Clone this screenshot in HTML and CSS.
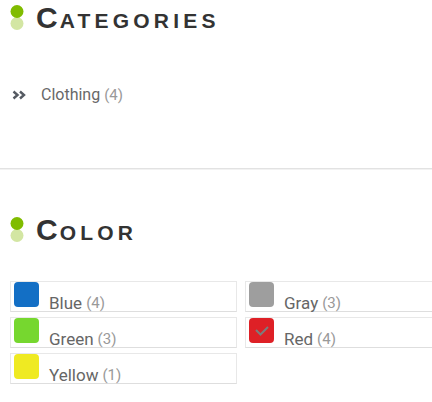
FILE: index.html
```html
<!DOCTYPE html>
<html lang="en">

<head>
    <meta charset="UTF-8">
    <meta name="viewport" content="width=device-width, initial-scale=1.0">
    <title>Shop filters</title>
    <link rel="stylesheet" href="styles.css">
</head>

<body>
    <div class="widget widget-cats">
        <h3 class="widget-title">
            <svg class="dots" width="14" height="26" viewBox="0 0 14 26">
                <circle cx="7" cy="18.5" r="6.5" fill="#d3e6a3" />
                <circle cx="7" cy="6.5" r="6.5" fill="#80bc00" />
            </svg>
            <span class="title-text">Categories</span>
        </h3>
        <ul class="cat-list">
            <li>
                <svg class="arrow" width="14" height="10" viewBox="0 0 14 10">
                    <polyline points="1.5,1.5 5.5,5 1.5,8.5" />
                    <polyline points="8,1.5 12,5 8,8.5" />
                </svg>
                <a href="#">Clothing</a> <span class="count">(4)</span>
            </li>
        </ul>
    </div>

    <div class="widget widget-color">
        <h3 class="widget-title">
            <svg class="dots" width="14" height="26" viewBox="0 0 14 26">
                <circle cx="7" cy="18.5" r="6.5" fill="#d3e6a3" />
                <circle cx="7" cy="6.5" r="6.5" fill="#80bc00" />
            </svg>
            <span class="title-text">Color</span>
        </h3>
        <ul class="color-list">
            <li><span class="swatch blue"></span><span class="name">Blue</span> <span class="count">(4)</span></li>
            <li><span class="swatch gray"></span><span class="name">Gray</span> <span class="count">(3)</span></li>
            <li><span class="swatch green"></span><span class="name">Green</span> <span class="count">(3)</span></li>
            <li>
                <span class="swatch red">
                    <svg class="check" width="25" height="25" viewBox="0 0 25 25">
                        <polyline points="7,12 11.5,16.5 19,9" />
                    </svg>
                </span><span class="name">Red</span> <span class="count">(4)</span>
            </li>
            <li><span class="swatch yellow"></span><span class="name">Yellow</span> <span class="count">(1)</span></li>
        </ul>
    </div>
</body>

</html>
```

FILE: styles.css
```css
* {
    margin: 0;
    padding: 0;
}

body {
    font-family: Roboto, "Liberation Sans", sans-serif;
    background: #fff;
    color: #666;
    overflow: hidden;
}

ul {
    list-style: none;
}

/* widget heading with the two dots */
.widget-title {
    display: flex;
    align-items: flex-start;
    height: 34px;
    padding-left: 10px;
    font-family: "Liberation Sans", Arial, sans-serif;
    font-size: 21px;
    line-height: 33px;
    font-weight: bold;
    text-transform: uppercase;
    letter-spacing: 4.2px;
    color: #333;
}

.title-text {
    height: 34px;
}

.title-text::first-letter {
    font-size: 30px;
    letter-spacing: 2px;
}

.dots {
    flex: none;
    margin-top: 4px;
    margin-right: 12px;
}

.widget-cats {
    padding-top: 1px;
    padding-bottom: 63px;
    border-bottom: 1px solid #e2e2e2;
    box-shadow: 0 1px 0 #f2f2f2;
}

.cat-list {
    margin-top: 50px;
    padding-left: 12px;
}

.cat-list li {
    font-size: 16px;
    line-height: 20px;
}

.cat-list a {
    color: #686868;
    text-decoration: none;
}

.arrow {
    fill: none;
    stroke: #555a62;
    stroke-width: 2.4;
    margin-right: 11px;
}

.count {
    color: #999;
    font-size: 15px;
}

.widget-color {
    margin-top: 44px;
    overflow: hidden;
}

.color-list {
    margin-top: 34px;
    margin-left: 10px;
    width: 462px;
    display: grid;
    grid-template-columns: 227px 227px;
    column-gap: 8px;
    row-gap: 5px;
}

.color-list li {
    height: 31px;
    display: flex;
    align-items: flex-end;
    padding-left: 3px;
    border: 1px solid #e8e8e8;
    border-bottom-color: #dedede;
    font-size: 17px;
    line-height: 16px;
    white-space: nowrap;
    box-sizing: border-box;
}

.color-list .count {
    margin-left: 4px;
    font-size: 15px;
    color: #999;
}

.swatch {
    align-self: flex-start;
    width: 25px;
    height: 25px;
    margin-right: 10px;
    border-radius: 4px;
}

.blue {
    background: #136fc5;
}

.gray {
    background: #9e9e9e;
}

.green {
    background: #76d72f;
}

.red {
    background: #de2026;
}

.yellow {
    background: #efea22;
}

.check {
    display: block;
    fill: none;
    stroke: #7c7c7c;
    stroke-width: 2;
}
```
